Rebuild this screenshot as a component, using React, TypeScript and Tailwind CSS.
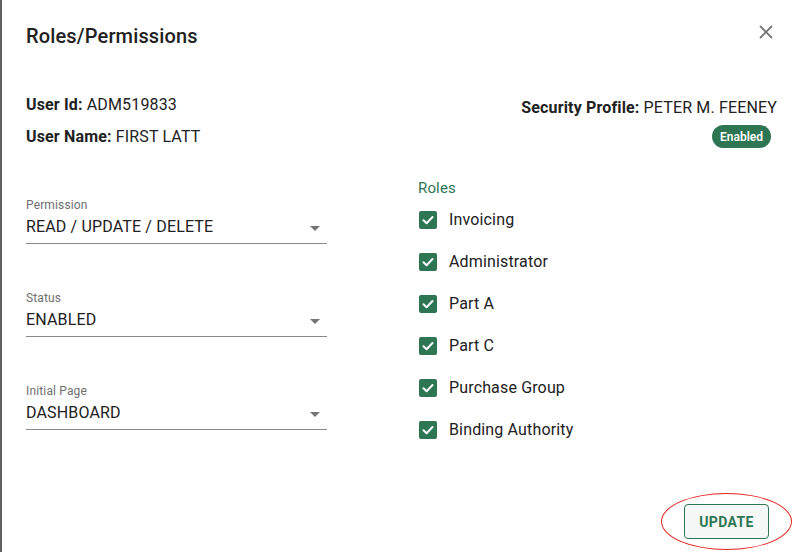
import { useState } from "react";

const GREEN = "#2e7653";

const fields = [
  { label: "Permission", value: "READ / UPDATE / DELETE" },
  { label: "Status", value: "ENABLED" },
  { label: "Initial Page", value: "DASHBOARD" },
];

const roleNames = [
  "Invoicing",
  "Administrator",
  "Part A",
  "Part C",
  "Purchase Group",
  "Binding Authority",
];

const SelectField = ({ label, value }: { label: string; value: string }) => (
  <div className="flex flex-col border-b border-[#8a8a8a] pb-1">
    <span className="h-4 text-xs leading-4 tracking-[0.15px] text-[#6f6f6f]">{label}</span>
    <div className="mt-[2px] flex h-6 items-center justify-between">
      <span className="text-base leading-6 tracking-[0.15px] text-[#212121]">{value}</span>
      <svg width="10" height="5" viewBox="0 0 10 5" className="mr-[7px] mt-[3px]">
        <path d="M0 0 L10 0 L5 5 Z" fill="#757575" />
      </svg>
    </div>
  </div>
);

const CheckBox = ({ checked, onClick }: { checked: boolean; onClick: () => void }) => (
  <button
    onClick={onClick}
    className={`ml-px flex h-[18px] w-[18px] items-center justify-center rounded-[2px] ${
      checked ? "bg-[#2e7653]" : "border-2 border-[#757575] bg-white"
    }`}
  >
    {checked && (
      <svg width="14" height="14" viewBox="0 0 14 14">
        <path
          d="M2.5 7.2 L5.6 10.2 L11.5 4"
          fill="none"
          stroke="white"
          strokeWidth="2"
          strokeLinecap="round"
          strokeLinejoin="round"
        />
      </svg>
    )}
  </button>
);

export default function App() {
  const [roles, setRoles] = useState<boolean[]>(roleNames.map(() => true));

  const toggle = (i: number) =>
    setRoles((prev) => prev.map((r, idx) => (idx === i ? !r : r)));

  return (
    <div
      className="flex h-[552px] w-[801px] overflow-hidden bg-white"
      style={{ fontFamily: "Roboto, 'Liberation Sans', sans-serif" }}
    >
      <div className="w-[2px] bg-[#616161]" />
      <div className="relative flex flex-1 flex-col px-6">
        {/* header */}
        <div className="mt-5 flex h-8 items-center justify-between">
          <h2 className="text-[20px] font-medium tracking-[0.15px] text-[#212121]">
            Roles/Permissions
          </h2>
          <button title="Close" className="mr-1 mt-[-8px]">
            <svg width="14" height="14" viewBox="0 0 14 14">
              <path d="M1 1 L13 13 M13 1 L1 13" stroke="#757575" strokeWidth="1.8" />
            </svg>
          </button>
        </div>

        {/* user info */}
        <div className="mt-[43px] flex justify-between text-base tracking-[0.15px] text-[#212121]">
          <div className="flex flex-col gap-3">
            <div className="h-5 leading-5">
              <span className="font-bold">User Id:</span> ADM519833
            </div>
            <div className="h-5 leading-5">
              <span className="font-bold">User Name:</span> FIRST LATT
            </div>
          </div>
          <div className="mt-[3px] flex flex-col items-end">
            <div className="h-5 leading-5">
              <span className="font-bold">Security Profile:</span> PETER M. FEENEY
            </div>
            <span className="mr-[6px] mt-[7px] flex h-[23px] items-center rounded-full bg-[#2e7653] px-[8px] text-xs font-semibold tracking-normal text-white">
              Enabled
            </span>
          </div>
        </div>

        {/* fields + roles */}
        <div className="mt-[30px] flex">
          <div className="flex w-[301px] flex-col gap-[46px] pt-[19px]">
            {fields.map((f) => (
              <SelectField key={f.label} label={f.label} value={f.value} />
            ))}
          </div>
          <div className="ml-[91px] flex flex-col">
            <span className="h-5 text-[15px] leading-5 tracking-[0.15px]" style={{ color: GREEN }}>
              Roles
            </span>
            <div className="mt-px flex flex-col">
              {roleNames.map((name, i) => (
                <label key={name} className="flex h-[42px] items-center gap-3">
                  <CheckBox checked={roles[i]} onClick={() => toggle(i)} />
                  <span className="text-base tracking-[0.15px] text-[#212121]">{name}</span>
                </label>
              ))}
            </div>
          </div>
        </div>

        {/* footer */}
        <div className="mt-auto mb-[13px] flex justify-end">
          <button className="mr-2 h-[35px] w-[85px] rounded-[4px] border border-[#2e7653] bg-[#f5f8f6] text-sm font-bold tracking-[0.4px] text-[#2e7653]">
            UPDATE
          </button>
        </div>
        <div className="pointer-events-none absolute left-[659px] top-[493px] h-[57px] w-[131px] rounded-[50%] border-[1.5px] border-[#e3261f]" />
      </div>
    </div>
  );
}
